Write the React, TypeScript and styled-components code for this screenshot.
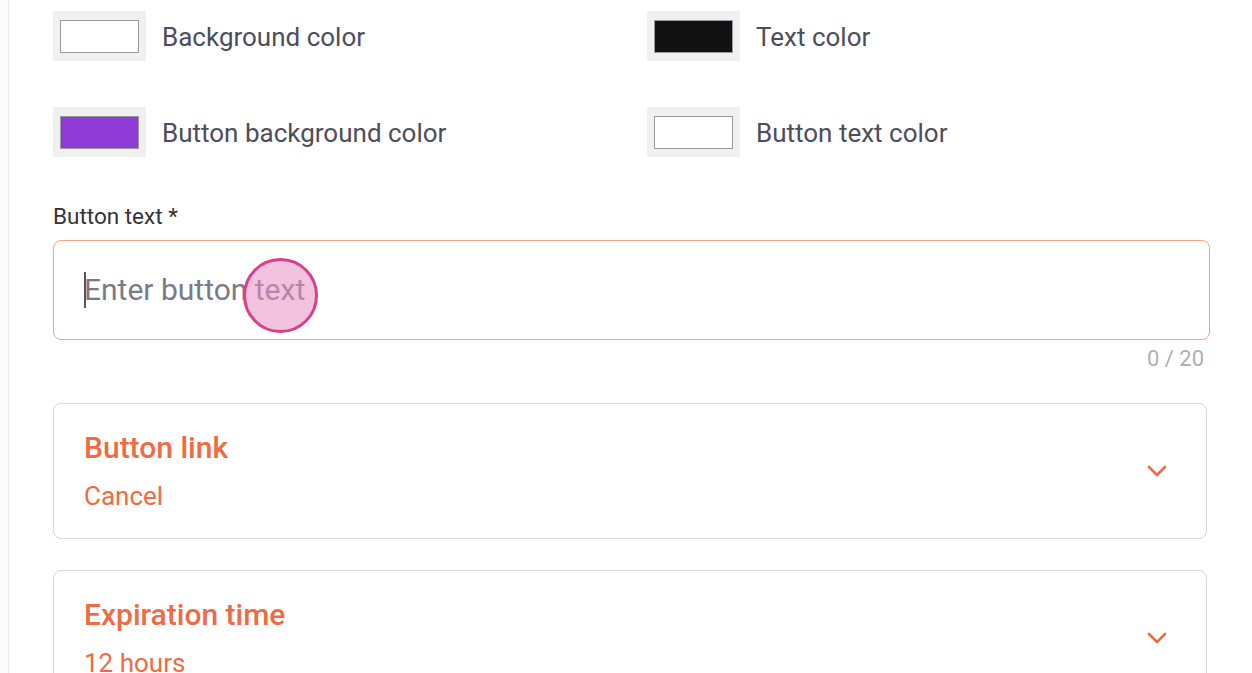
import React from "react";
import styled, { createGlobalStyle } from "styled-components";

const Global = createGlobalStyle`
  html, body { margin: 0; padding: 0; background: #ffffff; }
  body { font-family: Roboto, "Noto Sans", "Liberation Sans", sans-serif; }
  * { box-sizing: border-box; }
`;

const Page = styled.div`
  width: 1252px;
  height: 673px;
  overflow: hidden;
  background: #fcfcfc;
  padding-left: 8px;
`;

const Panel = styled.div`
  height: 100%;
  background: #ffffff;
  border-left: 1px solid #ececec;
  padding: 11px 42px 0 44px;
  display: flex;
  flex-direction: column;
`;

const ColorGrid = styled.div`
  display: grid;
  grid-template-columns: 594px 1fr;
  row-gap: 46px;
  flex-shrink: 0;
`;

const ColorItem = styled.div`
  display: flex;
  align-items: center;
  gap: 16px;
`;

const Tile = styled.div`
  width: 93px;
  height: 50px;
  background: #f0f0f0;
  padding: 9px 7px 8px 7px;
`;

const Swatch = styled.div<{ $color: string }>`
  width: 100%;
  height: 100%;
  background: ${(p) => p.$color};
  border: 1px solid #9a9a9e;
`;

const ColorLabel = styled.span`
  font-size: 26px;
  line-height: 30px;
  color: #4d4d5c;
  margin-top: 2px;
`;

const FieldLabel = styled.label`
  margin-top: 46px;
  font-size: 22.5px;
  line-height: 26px;
  color: #333338;
  flex-shrink: 0;
`;

const InputBox = styled.div`
  position: relative;
  margin-top: 11px;
  height: 100px;
  flex-shrink: 0;
  border: 1.5px solid #f4a486;
  border-radius: 8px;
  display: flex;
  align-items: center;
  padding-left: 30px;
`;

const Caret = styled.span`
  width: 2px;
  height: 36px;
  background: #55555f;
  margin-right: -2px;
`;

const Placeholder = styled.span`
  font-size: 30px;
  line-height: 36px;
  color: #7b7b87;
`;

const TouchDot = styled.span`
  position: absolute;
  left: 189px;
  top: 17px;
  width: 75px;
  height: 75px;
  border-radius: 50%;
  border: 3px solid #d8408d;
  background: rgba(231, 144, 195, 0.55);
`;

const Counter = styled.div`
  align-self: flex-end;
  margin-right: 6px;
  margin-top: 7px;
  font-size: 22px;
  line-height: 24px;
  color: #afafb3;
  flex-shrink: 0;
`;

const Card = styled.div`
  margin-top: 32px;
  margin-right: 3px;
  height: 136px;
  flex-shrink: 0;
  border: 1.5px solid #d6d6d8;
  border-radius: 8px;
  display: flex;
  align-items: center;
  justify-content: space-between;
  padding: 0 38px 0 30px;
  & + & { margin-top: 31px; }
`;

const CardText = styled.div`
  display: flex;
  flex-direction: column;
  gap: 16px;
  color: #ee6b44;
`;

const CardTitle = styled.span`
  font-size: 30px;
  line-height: 34px;
  font-weight: 500;
`;

const CardValue = styled.span`
  font-size: 26px;
  line-height: 30px;
`;

const Chevron = () => (
  <svg width="22" height="14" viewBox="0 0 22 14" fill="none">
    <path d="M3 3 L11 11 L19 3" stroke="#ee6b44" strokeWidth="2.6" strokeLinecap="round" strokeLinejoin="round" />
  </svg>
);

const colors = [
  { label: "Background color", color: "#ffffff" },
  { label: "Text color", color: "#111111" },
  { label: "Button background color", color: "#8e3ad6" },
  { label: "Button text color", color: "#ffffff" },
];

export default function App() {
  return (
    <>
      <Global />
      <Page>
        <Panel>
          <ColorGrid>
            {colors.map((c) => (
              <ColorItem key={c.label}>
                <Tile>
                  <Swatch $color={c.color} />
                </Tile>
                <ColorLabel>{c.label}</ColorLabel>
              </ColorItem>
            ))}
          </ColorGrid>
          <FieldLabel>Button text *</FieldLabel>
          <InputBox>
            <Caret />
            <Placeholder>Enter button text</Placeholder>
            <TouchDot />
          </InputBox>
          <Counter>0 / 20</Counter>
          <Card>
            <CardText>
              <CardTitle>Button link</CardTitle>
              <CardValue>Cancel</CardValue>
            </CardText>
            <Chevron />
          </Card>
          <Card>
            <CardText>
              <CardTitle>Expiration time</CardTitle>
              <CardValue>12 hours</CardValue>
            </CardText>
            <Chevron />
          </Card>
        </Panel>
      </Page>
    </>
  );
}
